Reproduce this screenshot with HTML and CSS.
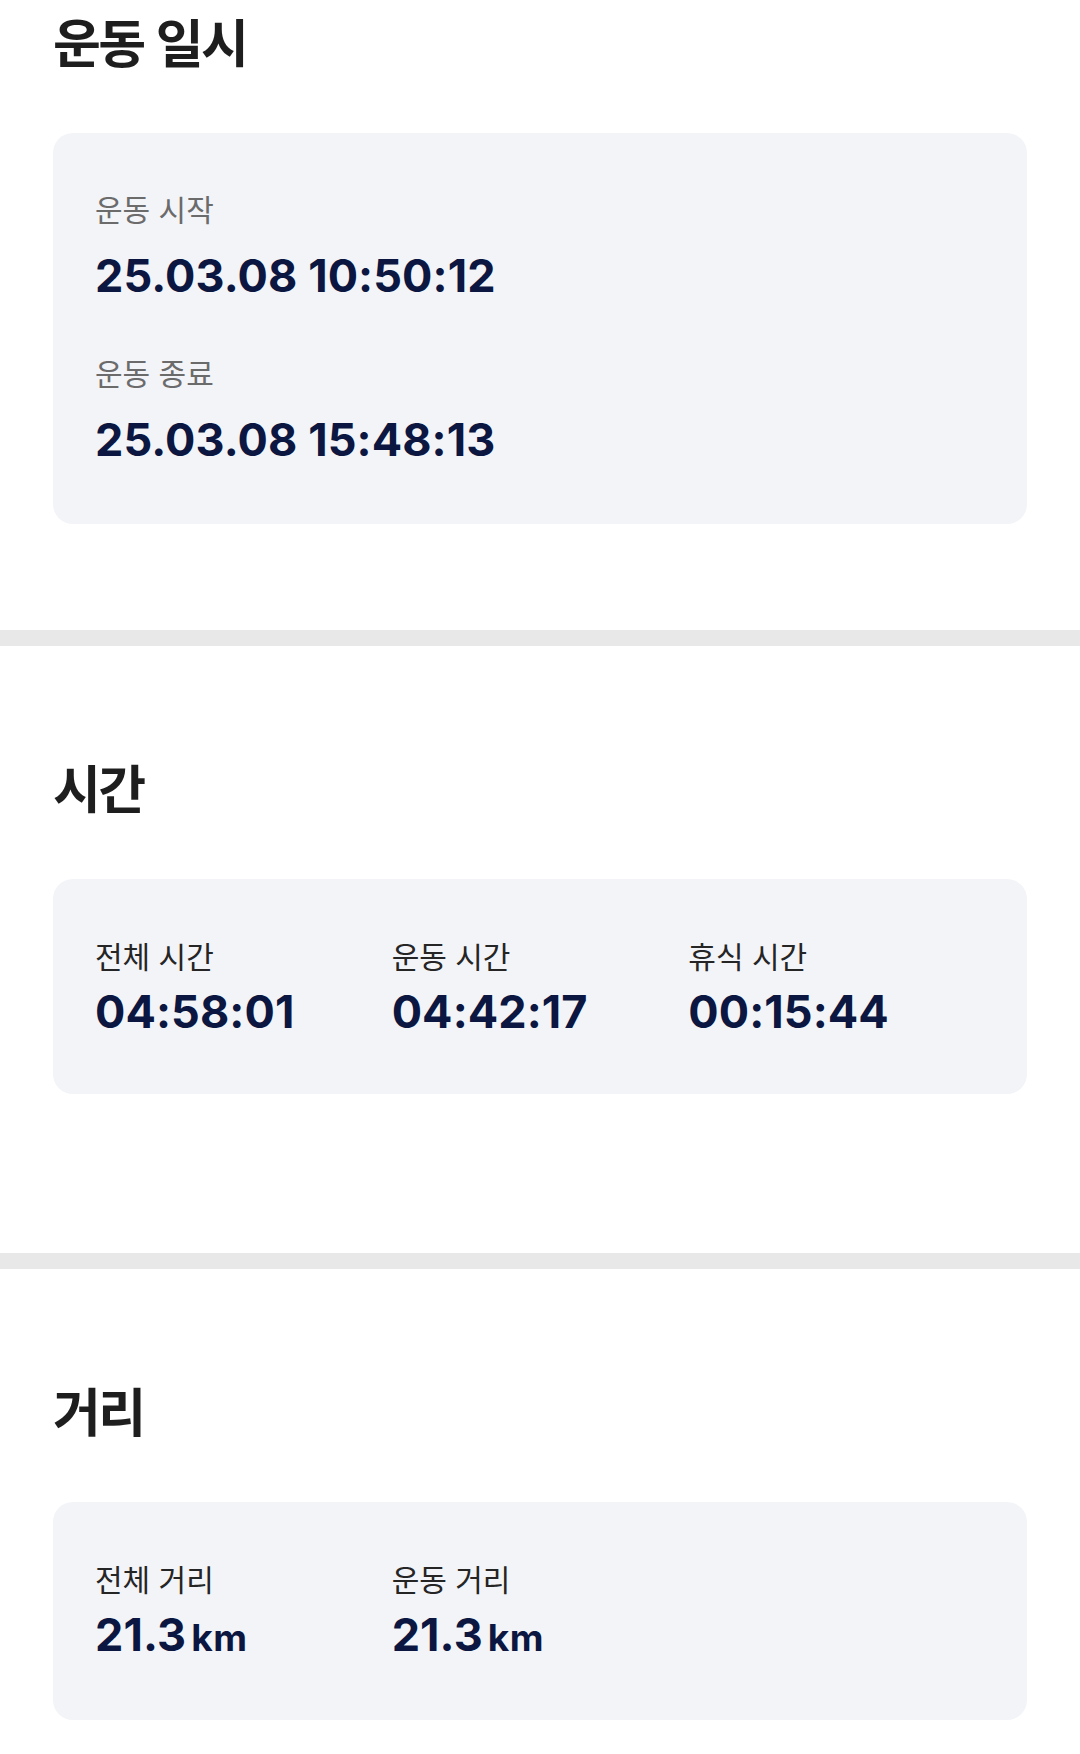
FILE: index.html
```html
<!DOCTYPE html>
<html lang="ko">
<head>
<meta charset="utf-8">
<title>운동 기록</title>
<link rel="stylesheet" href="styles.css">
</head>
<body>
<main class="page">
  <section class="section section-date">
    <h2 class="title">운동 일시</h2>
    <div class="card card-stack">
      <div class="item">
        <div class="label label-muted">운동 시작</div>
        <div class="value">25.03.08 10:50:12</div>
      </div>
      <div class="item">
        <div class="label label-muted">운동 종료</div>
        <div class="value">25.03.08 15:48:13</div>
      </div>
    </div>
  </section>

  <div class="divider"></div>

  <section class="section section-time">
    <h2 class="title">시간</h2>
    <div class="card card-grid">
      <div class="item">
        <div class="label">전체 시간</div>
        <div class="value">04:58:01</div>
      </div>
      <div class="item">
        <div class="label">운동 시간</div>
        <div class="value">04:42:17</div>
      </div>
      <div class="item">
        <div class="label">휴식 시간</div>
        <div class="value">00:15:44</div>
      </div>
    </div>
  </section>

  <div class="divider"></div>

  <section class="section section-dist">
    <h2 class="title">거리</h2>
    <div class="card card-grid">
      <div class="item">
        <div class="label">전체 거리</div>
        <div class="value">21.3<span class="unit">km</span></div>
      </div>
      <div class="item">
        <div class="label">운동 거리</div>
        <div class="value">21.3<span class="unit">km</span></div>
      </div>
    </div>
  </section>
</main>
</body>
</html>
```

FILE: styles.css
```css
* {
  box-sizing: border-box;
}

html, body {
  margin: 0;
  padding: 0;
  background: #ffffff;
}

body {
  font-family: "Noto Sans CJK KR", "Noto Sans", sans-serif;
  color: #1f1f1f;
}

.page {
  width: 1080px;
}

.section {
  padding-left: 53px;
  padding-right: 53px;
}

.section-date {
  padding-top: 7px;
  padding-bottom: 106px;
}

.section-time {
  padding-top: 107px;
  padding-bottom: 159px;
}

.section-dist {
  padding-top: 107px;
  padding-bottom: 34px;
}

.title {
  margin: 0 0 58px 0;
  font-size: 52px;
  line-height: 68px;
  font-weight: 700;
  letter-spacing: -2.5px;
  color: #1e1e1e;
}

.card {
  background: #f3f4f8;
  border-radius: 20px;
}

.card-stack {
  padding: 55px 42px 56px;
  display: flex;
  flex-direction: column;
  gap: 48px;
}

.card-stack .value {
  margin-top: 20px;
}

.card-grid {
  padding: 56px 42px 54px;
  display: grid;
  grid-template-columns: repeat(3, 1fr);
}

.card-grid .value {
  margin-top: 9px;
}

.label {
  font-size: 30px;
  line-height: 40px;
  font-weight: 400;
  color: #252525;
}

.label-muted {
  color: #6b6b6b;
}

.value {
  font-family: Inter, "Noto Sans CJK KR", sans-serif;
  font-size: 45px;
  line-height: 56px;
  font-weight: 700;
  letter-spacing: 0.1px;
  color: #0b1641;
  white-space: nowrap;
}

.unit {
  font-size: 37px;
  letter-spacing: 0.5px;
  margin-left: 5px;
}

.divider {
  height: 16px;
  background: #e8e8e8;
}
```
